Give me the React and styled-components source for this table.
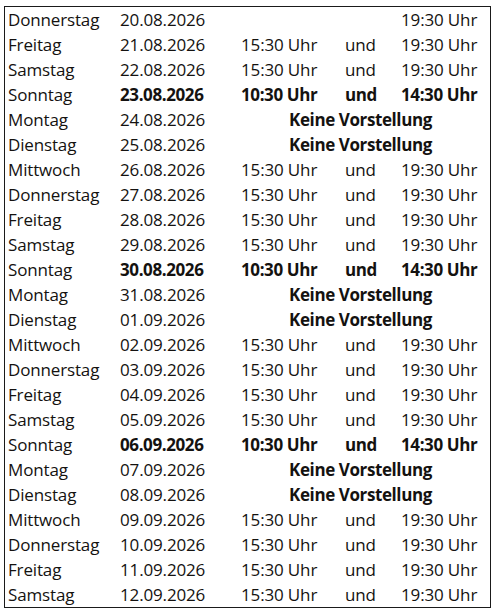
import React from "react";
import styled, { createGlobalStyle } from "styled-components";

const Global = createGlobalStyle`
  html, body { margin: 0; padding: 0; background: #fff; }
  body { font-family: "Open Sans", "Liberation Sans", sans-serif; color: #141210; }
`;

const Page = styled.div`
  padding: 6px 0 0 4px;
`;

const Table = styled.div`
  width: 485px;
  border: 1px solid #1a1a1a;
  display: flex;
  flex-direction: column;
`;

const Row = styled.div`
  display: grid;
  grid-template-columns: 112px 121px 104px 56px 1fr;
  height: 25px;
  align-items: center;
  padding-left: 3px;
  font-size: 17px;
  letter-spacing: -0.15px;
  white-space: nowrap;
`;

const Cell = styled.span`
  font-weight: ${(p) => (p.$bold ? 700 : 400)};
  letter-spacing: ${(p) => (p.$bold ? "-0.4px" : "inherit")};
`;

const Notice = styled.span`
  grid-column: 3 / 6;
  text-align: center;
  font-weight: 700;
  letter-spacing: -0.4px;
  padding-right: 10px;
`;

const rows = [
  ["Donnerstag", "20.08.2026", "single"],
  ["Freitag", "21.08.2026", "n"],
  ["Samstag", "22.08.2026", "n"],
  ["Sonntag", "23.08.2026", "sun"],
  ["Montag", "24.08.2026", "off"],
  ["Dienstag", "25.08.2026", "off"],
  ["Mittwoch", "26.08.2026", "n"],
  ["Donnerstag", "27.08.2026", "n"],
  ["Freitag", "28.08.2026", "n"],
  ["Samstag", "29.08.2026", "n"],
  ["Sonntag", "30.08.2026", "sun"],
  ["Montag", "31.08.2026", "off"],
  ["Dienstag", "01.09.2026", "off"],
  ["Mittwoch", "02.09.2026", "n"],
  ["Donnerstag", "03.09.2026", "n"],
  ["Freitag", "04.09.2026", "n"],
  ["Samstag", "05.09.2026", "n"],
  ["Sonntag", "06.09.2026", "sun"],
  ["Montag", "07.09.2026", "off"],
  ["Dienstag", "08.09.2026", "off"],
  ["Mittwoch", "09.09.2026", "n"],
  ["Donnerstag", "10.09.2026", "n"],
  ["Freitag", "11.09.2026", "n"],
  ["Samstag", "12.09.2026", "n"],
];

export default function App() {
  return (
    <Page>
      <Global />
      <Table>
        {rows.map(([day, date, kind], i) => {
          const sun = kind === "sun";
          return (
            <Row key={i}>
              <Cell>{day}</Cell>
              <Cell $bold={sun}>{date}</Cell>
              {kind === "off" ? (
                <Notice>Keine Vorstellung</Notice>
              ) : kind === "single" ? (
                <>
                  <Cell />
                  <Cell />
                  <Cell>19:30 Uhr</Cell>
                </>
              ) : (
                <>
                  <Cell $bold={sun}>{sun ? "10:30 Uhr" : "15:30 Uhr"}</Cell>
                  <Cell $bold={sun}>und</Cell>
                  <Cell $bold={sun}>{sun ? "14:30 Uhr" : "19:30 Uhr"}</Cell>
                </>
              )}
            </Row>
          );
        })}
      </Table>
    </Page>
  );
}
